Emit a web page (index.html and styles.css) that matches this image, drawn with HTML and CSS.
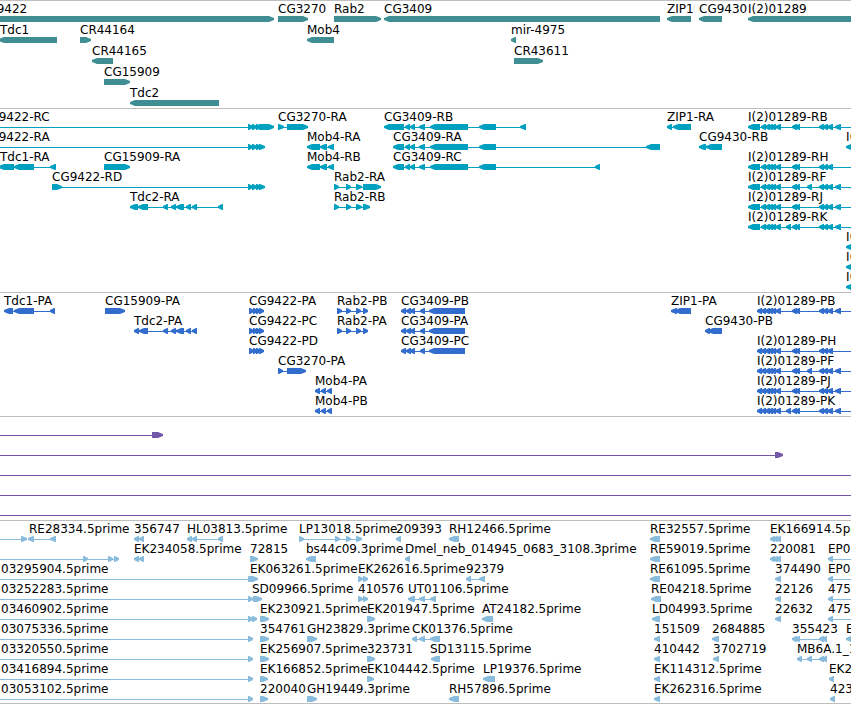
FILE: index.html
```
<!DOCTYPE html>
<html lang="en">
<head>
  <meta charset="UTF-8" />
  <meta name="viewport" content="width=device-width, initial-scale=1.0" />
  <title>Genome Browser</title>
  <link rel="stylesheet" href="styles.css">
</head>
<body>
  <main class="browser">
    <section class="track genes" id="genes" aria-label="Genes"></section>
    <section class="track transcripts" id="transcripts" aria-label="Transcripts"></section>
    <section class="track proteins" id="proteins" aria-label="Proteins"></section>
    <section class="track clones" id="clones" aria-label="Clones"></section>
    <section class="track ests" id="ests" aria-label="ESTs"></section>
  </main>

  <script src="tracks.js"></script>
</body>
</html>
```
FILE: styles.css
```
* {
  box-sizing: border-box;
}

body {
  margin: 0;
  background: #fff;
  color: #000;
  font-family: "DejaVu Sans", sans-serif;
  font-size: 12px;
}

.browser {
  overflow: hidden;
}

.track {
  display: grid;
  padding: 1px 0 2px;
  border-top: 1px solid #bebebe;
}

.genes {
  row-gap: 1px;
  color: #3f8e94;
}

.transcripts {
  color: #00a0c0;
}

.proteins {
  color: #326ccc;
}

.clones {
  color: #7358a8;
}

.ests {
  color: #89bcdc;
  padding-bottom: 1px;
  border-bottom: 1px solid #bebebe;
}

.labels {
  position: relative;
  height: 14px;
  line-height: 14px;
  color: #000;
}

/* labels sit at their feature's place on the sequence */
.label {
  position: absolute;
  top: 0;
  white-space: nowrap;
}

.glyphs {
  display: block;
  width: 100%;
  height: 6px;
  fill: currentColor;
}
```
FILE: tracks.js
```
const HEAD = 6;
const MIN_WIDTH = 5;
const FAR = 4000;

// exon groups that several transcripts share
const cg9422 = [[248, 252], [252, 256], [256, 259], [259, 265]];
const mob4 = [[307, 320], [320, 327], [328, 334]];
const cg3409 = [[405, 410], [410, 415], [419, 425], [430, 468], [479, 496]];
const lethal = [[761, 765], [765, 768], [768, 771], [771, 775], [775, 781], [792, 796], [795, 800], [819, 823], [823, 827], [827, 833]];
const lethalR = [[748, 760], ...lethal];
const lethalP = [[757, 761], ...lethal];
const pa9422 = [[249, 253], [253, 257], [256, 260], [259, 264]];
const paRab2 = [[337, 342], [346, 351], [356, 361], [363, 368]];
const pa3409 = [[401, 406], [406, 410], [410, 415], [420, 425], [429, 465]];
const paMob4 = [[315, 320], [321, 326], [327, 332]];

// feature: [label, label x, strand, exons, line start, line end]
const tracks = {
  genes: [
    [
      ["CG9422", -21, "+", [[-21, 274]]],
      ["CG3270", 278, "+", [[278, 308]]],
      ["Rab2", 334, "+", [[334, 381]]],
      ["CG3409", 384, "-", [[384, 660]]],
      ["ZIP1", 667, "-", [[667, 691]]],
      ["CG9430", 699, "-", [[699, 722]]],
      ["I(2)01289", 748, "-", [[748, FAR]]]
    ],
    [
      ["Tdc1", 0, "-", [[-1, 57]]],
      ["CR44164", 80, "+", [[80, 91]]],
      ["Mob4", 307, "-", [[307, 334]]],
      ["mir-4975", 511, "-", [[511, 516]]]
    ],
    [
      ["CR44165", 92, "-", [[92, 113]]],
      ["CR43611", 514, "+", [[514, 543]]]
    ],
    [["CG15909", 104, "+", [[104, 130]]]],
    [["Tdc2", 130, "-", [[130, 219]]]]
  ],

  transcripts: [
    [
      ["CG9422-RC", -19, "+", [[248, 252], [252, 256], [256, 259], [259, 274]], -19],
      ["CG3270-RA", 278, "+", [[278, 284], [287, 308]]],
      ["CG3409-RB", 384, "-", [[384, 404], ...cg3409, [520, 526]]],
      ["ZIP1-RA", 667, "-", [[667, 672], [673, 691]]],
      ["I(2)01289-RB", 748, "-", [...lethalR, [835, 841]], 748, FAR]
    ],
    [
      ["CG9422-RA", -19, "+", cg9422, -19],
      ["Mob4-RA", 307, "-", mob4],
      ["CG3409-RA", 393, "-", [[393, 404], ...cg3409, [646, 660]]],
      ["CG9430-RB", 699, "-", [[699, 706], [706, 722]]],
      ["I(2)01289-RC", 846, "-", [[846, 858]], 846, FAR]
    ],
    [
      ["Tdc1-RA", 0, "-", [[-1, 14], [14, 34], [50, 56]]],
      ["CG15909-RA", 104, "+", [[104, 130]]],
      ["Mob4-RB", 307, "-", mob4],
      ["CG3409-RC", 393, "-", [[393, 404], ...cg3409, [595, 600]]],
      ["I(2)01289-RH", 748, "-", lethalR, 748, FAR]
    ],
    [
      ["CG9422-RD", 52, "+", [[52, 62], ...cg9422]],
      ["Rab2-RA", 334, "+", [[334, 339], [346, 351], [356, 362], [363, 381]]],
      ["I(2)01289-RF", 748, "-", [...lethalR, [807, 812], [835, 841]], 748, FAR]
    ],
    [
      ["Tdc2-RA", 130, "-", [[130, 138], [138, 148], [163, 168], [171, 176], [176, 184], [186, 191], [192, 197], [218, 223]]],
      ["Rab2-RB", 334, "+", [[334, 339], [346, 351], [356, 362], [363, 370]]],
      ["I(2)01289-RJ", 748, "-", [...lethalR, [835, 841]], 748, FAR]
    ],
    [["I(2)01289-RK", 748, "-", [...lethalR, [786, 791], [835, 841]], 748, FAR]],
    [["I(2)01289-RD", 846, "-", [[846, 858]], 846, FAR]],
    [["I(2)01289-RE", 846, "-", [[846, 858]], 846, FAR]],
    [["I(2)01289-RG", 846, "-", [[846, 858]], 846, FAR]]
  ],

  proteins: [
    [
      ["Tdc1-PA", 4, "-", [[4, 13], [14, 34], [50, 55]]],
      ["CG15909-PA", 105, "+", [[105, 125]]],
      ["CG9422-PA", 249, "+", pa9422],
      ["Rab2-PB", 337, "+", paRab2],
      ["CG3409-PB", 401, "-", pa3409],
      ["ZIP1-PA", 671, "-", [[671, 677], [675, 691]]],
      ["I(2)01289-PB", 757, "-", [...lethalP, [835, 841]], 757, FAR]
    ],
    [
      ["Tdc2-PA", 134, "-", [[134, 139], [139, 148], [163, 168], [171, 176], [176, 184], [186, 191], [192, 197]]],
      ["CG9422-PC", 249, "+", pa9422],
      ["Rab2-PA", 337, "+", paRab2],
      ["CG3409-PA", 401, "-", pa3409],
      ["CG9430-PB", 705, "-", [[705, 710], [708, 722]]]
    ],
    [
      ["CG9422-PD", 249, "+", pa9422],
      ["CG3409-PC", 401, "-", pa3409],
      ["I(2)01289-PH", 757, "-", lethalP, 757, FAR]
    ],
    [
      ["CG3270-PA", 278, "+", [[278, 283], [287, 306]]],
      ["I(2)01289-PF", 757, "-", [...lethalP, [807, 812], [835, 841]], 757, FAR]
    ],
    [
      ["Mob4-PA", 315, "-", paMob4],
      ["I(2)01289-PJ", 757, "-", [...lethalP, [835, 841]], 757, FAR]
    ],
    [
      ["Mob4-PB", 315, "-", paMob4],
      ["I(2)01289-PK", 757, "-", [...lethalP, [786, 791], [835, 841]], 757, FAR]
    ]
  ],

  clones: [
    [["", 0, "+", [[152, 163]], 0]],
    [["", 0, "+", [[775, 783]], 0]],
    [["", 0, "+", [], 0, FAR]],
    [["", 0, "+", [], 0, FAR]],
    [["", 0, "+", [], 0, FAR]]
  ],

  ests: [
    [
      ["", 0, "+", [[21, 27]], 0],
      ["RE28334.5prime", 29, "-", [[28, 34], [50, 56]]],
      ["356747", 134, "-", [[134, 139], [139, 144]]],
      ["HL03813.5prime", 187, "-", [[187, 192], [192, 197], [218, 223]]],
      ["LP13018.5prime", 299, "+", [[299, 304], [335, 340], [346, 351], [356, 362]]],
      ["209393", 396, "-", [[396, 401]]],
      ["RH12466.5prime", 449, "-", [[449, 459]]],
      ["RE32557.5prime", 650, "-", [[650, 660]]],
      ["EK166914.5prime", 770, "-", [[770, 775], [773, 778], [776, 781]]]
    ],
    [
      ["", 0, "+", [[83, 88], [108, 113], [114, 119]], 0],
      ["EK234058.5prime", 134, "-", [[134, 139], [139, 144]]],
      ["72815", 250, "+", [[250, 258]]],
      ["bs44c09.3prime", 306, "-", [[306, 316]]],
      ["Dmel_neb_014945_0683_3108.3prime", 405, "-", [[405, 410]]],
      ["RE59019.5prime", 650, "-", [[650, 660]]],
      ["220081", 770, "-", [[770, 775], [773, 778], [776, 781]]],
      ["EP0", 828, "-", [[828, 833]], 828, FAR]
    ],
    [
      ["03295904.5prime", 1, "+", [[248, 252]], 0],
      ["EK063261.5prime", 250, "+", [[250, 258]]],
      ["EK262616.5prime", 358, "+", [[358, 363], [363, 368]]],
      ["92379", 466, "-", [[466, 471], [479, 485]]],
      ["RE61095.5prime", 650, "-", [[650, 660]]],
      ["374490", 775, "-", [[775, 781]]],
      ["EP0", 828, "-", [[828, 833]], 828, FAR]
    ],
    [
      ["03252283.5prime", 1, "+", [[248, 253]], 0],
      ["SD09966.5prime", 252, "+", [[253, 262]]],
      ["410576", 358, "+", [[358, 363], [363, 368]]],
      ["UT01106.5prime", 408, "-", [[408, 415], [419, 425], [430, 436]]],
      ["RE04218.5prime", 651, "-", [[651, 661]]],
      ["22126", 775, "-", [[775, 781]]],
      ["475", 828, "-", [[828, 833]], 828, FAR]
    ],
    [
      ["03460902.5prime", 1, "+", [[248, 252], [252, 257]], 0],
      ["EK230921.5prime", 260, "+", [[260, 269]]],
      ["EK201947.5prime", 367, "+", [[367, 375]]],
      ["AT24182.5prime", 482, "-", [[482, 493]]],
      ["LD04993.5prime", 652, "-", [[652, 660]]],
      ["22632", 775, "-", [[775, 781]]],
      ["475", 828, "-", [[828, 833]], 828, FAR]
    ],
    [
      ["03075336.5prime", 1, "+", [[248, 253]], 0],
      ["354761", 260, "+", [[260, 269]]],
      ["GH23829.3prime", 307, "+", [[307, 317]]],
      ["CK01376.5prime", 412, "-", [[412, 417], [419, 425], [430, 440]]],
      ["151509", 654, "-", [[654, 660]]],
      ["2684885", 712, "-", [[712, 719]]],
      ["355423", 792, "-", [[792, 796], [795, 800], [819, 823], [822, 827]]],
      ["EK", 846, "-", [[846, 856]]]
    ],
    [
      ["03320550.5prime", 1, "+", [[248, 253]], 0],
      ["EK256907.5prime", 260, "+", [[260, 269]]],
      ["323731", 367, "+", [[367, 375]]],
      ["SD13115.5prime", 430, "-", [[431, 440]]],
      ["410442", 654, "-", [[654, 660]]],
      ["3702719", 713, "-", [[713, 719]]],
      ["MB6A.1_1", 797, "-", [[797, 802], [807, 812], [819, 823], [822, 827]]]
    ],
    [
      ["03416894.5prime", 1, "+", [[248, 253]], 0],
      ["EK166852.5prime", 260, "+", [[260, 268]]],
      ["EK104442.5prime", 367, "+", [[367, 374]]],
      ["LP19376.5prime", 483, "-", [[483, 495]]],
      ["EK114312.5prime", 654, "-", [[654, 660]]],
      ["EK2", 829, "-", [[829, 834]]]
    ],
    [
      ["03053102.5prime", 1, "+", [[248, 253]], 0],
      ["220040", 260, "+", [[260, 268]]],
      ["GH19449.3prime", 307, "+", [[307, 317]]],
      ["RH57896.5prime", 449, "-", [[449, 459]]],
      ["EK262316.5prime", 654, "-", [[654, 660]]],
      ["423", 830, "-", [[830, 835]]]
    ]
  ]
};

// the head ends in a blunt, 2px tall tip
function exonPath(start, end, strand) {
  const width = Math.max(MIN_WIDTH, end - start);
  const head = Math.min(HEAD, width);
  if (strand === "+") {
    end = start + width;
    return `M${start} 0H${end - head + 1}L${end} 2V4L${end - head + 1} 6H${start}Z`;
  }
  end = start + width;
  return `M${end} 0H${start + head - 1}L${start} 2V4L${start + head - 1} 6H${end}Z`;
}

function drawRow(features) {
  const row = document.createElement("div");
  const labels = document.createElement("div");
  labels.className = "labels";
  let shapes = "";

  for (const [name, x, strand, exons, from, to] of features) {
    if (name) {
      const label = document.createElement("span");
      label.className = "label";
      label.style.left = x + "px";
      label.textContent = name;
      labels.appendChild(label);
    }

    const start = from ?? exons[0][0];
    const end = to ?? exons[exons.length - 1][1];
    shapes += `<rect x="${start}" y="3" width="${end - start}" height="1"/>`;
    for (const [s, e] of exons) {
      shapes += `<path d="${exonPath(s, e, strand)}"/>`;
    }
  }

  row.appendChild(labels);
  row.insertAdjacentHTML("beforeend", `<svg class="glyphs" aria-hidden="true">${shapes}</svg>`);
  return row;
}

for (const id in tracks) {
  const track = document.getElementById(id);
  tracks[id].forEach(features => track.appendChild(drawRow(features)));
}
```
